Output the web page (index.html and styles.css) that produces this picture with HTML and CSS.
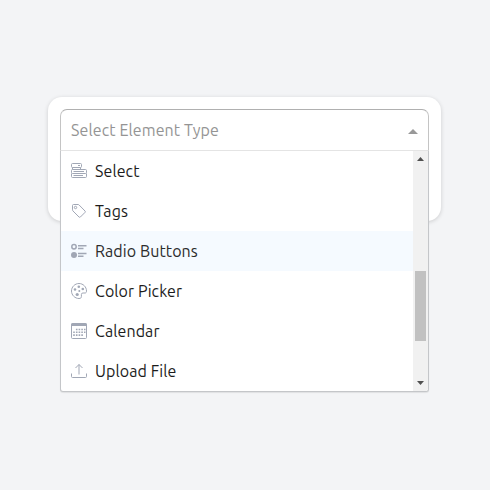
FILE: index.html
```
<!DOCTYPE html>
<html lang="en">
<head>
<meta charset="utf-8">
<title>Element type</title>
<link rel="stylesheet" href="styles.css">
</head>
<body>
<main class="card">
  <div class="select">
    <div class="control">
      <span class="placeholder">Select Element Type</span>
      <span class="arrow"></span>
    </div>
    <div class="menu">
      <ul class="options">
        <li class="option">
          <svg class="icon" viewBox="0 0 16 16"><rect x=".5" y=".5" width="10" height="4" rx="1"/><rect x=".5" y="6.5" width="15" height="4" rx="1"/><path d="M1.500 4.500V6.500M9.500 4.500V6.500M.5 10.500V13.500q0 1 1 1H14.500q1 0 1-1V10.500M2.500 8.500H13M2.500 12.500H12M7 2.500H9"/></svg>
          <span class="label">Select</span>
        </li>
        <li class="option">
          <svg class="icon" viewBox="0 0 16 16"><path d="M1.500 2.500q0-1 1-1H7q.6 0 1 .4L14 8q.7.700 0 1.400L9.400 14q-.7.700-1.400 0L2 8q-.5-.5-.5-1.200Z"/><circle cx="4.500" cy="4.500" r="1.200"/></svg>
          <span class="label">Tags</span>
        </li>
        <li class="option active">
          <svg class="icon" viewBox="0 0 16 16"><g class="thick"><circle cx="3" cy="3.800" r="2.200"/><path d="M7 2.800H15.500M7 5.500H12.500M7 10.500H15.500M7 13.200H12.500"/></g><circle class="solid" cx="3" cy="12" r="3"/></svg>
          <span class="label">Radio Buttons</span>
        </li>
        <li class="option">
          <svg class="icon" viewBox="0 0 16 16"><path d="M8 .5C3.900.5.5 3.900.5 8s3.400 7.500 7.500 7.500c1.800 0 2.400-.8 2.400-1.900V11.500q0-1.500 1.500-1.500h2.200c1 0 1.400-.8 1.400-2C15.500 3.900 12.100.5 8 .5Z"/><g class="solid"><circle cx="7.800" cy="3.700" r="1.300"/><circle cx="11.800" cy="6" r="1.300"/><circle cx="4" cy="6.500" r="1.300"/><circle cx="8.300" cy="8" r="1"/><circle cx="6.200" cy="11.500" r="1.600"/></g></svg>
          <span class="label">Color Picker</span>
        </li>
        <li class="option">
          <svg class="icon" viewBox="0 0 16 16"><rect x=".5" y=".5" width="15" height="15" rx="1"/><path class="solid" d="M0 2q0-2 2-2H14q2 0 2 2V3H0Z"/><path class="dots" d="M4.900 6.500H14.500M2.200 9.300H14.500M2.200 12.100H11.900"/></svg>
          <span class="label">Calendar</span>
        </li>
        <li class="option">
          <svg class="icon" viewBox="0 0 16 16"><path d="M.5 10.500V13.500q0 1 1 1H14.500q1 0 1-1V10.500M8 11.500V1.500M4.500 5L8 1.500L11.500 5"/></svg>
          <span class="label">Upload File</span>
        </li>
      </ul>
      <div class="scrollbar">
        <svg class="step" viewBox="0 0 15 15"><path d="M4 10H11L7.500 6Z"/></svg>
        <div class="track"><div class="thumb"></div></div>
        <svg class="step" viewBox="0 0 15 15"><path d="M4 5H11L7.500 9Z"/></svg>
      </div>
    </div>
  </div>
</main>
</body>
</html>
```
FILE: styles.css
```
* { box-sizing: border-box; }
body {
  margin: 0;
  padding: 97px 49px 0 48px;
  height: 490px;
  overflow: hidden;
  background: #f3f4f6;
  font: 16px/24px Ubuntu, "Noto Sans", sans-serif;
}
.card {
  height: 124px;
  padding: 12px;
  background: #fff;
  border-radius: 14px;
  box-shadow: 0 1px 4px rgba(0, 0, 0, .16);
}
.select { position: relative; }
.control {
  display: flex;
  align-items: center;
  justify-content: space-between;
  height: 42px;
  padding: 0 10px;
  border: 1px solid #b5b5b5;
  border-color: #b0b0b0 #c4c4c4 #e4e4e4;
  border-radius: 7px 7px 0 0;
  background: #fff;
}
.placeholder {
  color: #949494;
  letter-spacing: .11px;
  white-space: nowrap;
}
.arrow {
  margin-top: 2px;
  border: 5px solid transparent;
  border-top: 0;
  border-bottom-color: #999;
}
.menu {
  position: absolute;
  top: 42px;
  left: 0;
  width: 100%;
  height: 241px;
  display: flex;
  background: #fff;
  border: solid #c4c6c9;
  border-width: 0 1px 1px;
  border-radius: 0 0 3px 3px;
  box-shadow: 0 1px 1px rgba(0, 0, 0, .08);
  overflow: hidden;
}
.options {
  flex: 1;
  margin: 0;
  padding: 0;
  list-style: none;
}
.option {
  display: flex;
  align-items: center;
  gap: 8px;
  height: 40px;
  padding-left: 10px;
  color: #1c1c1c;
}
.active { background: #f5faff; color: #2c2c2c; }
.icon {
  width: 16px;
  height: 16px;
  fill: none;
  stroke: #a1a7b5;
  stroke-width: 1;
}
.thick { stroke-width: 1.5; }
.solid { fill: #a1a7b5; stroke: none; }
.dots { stroke-width: 1.6; stroke-dasharray: 1.6 1.1; }
.label { letter-spacing: .09px; white-space: nowrap; }
.scrollbar {
  width: 15px;
  display: flex;
  flex-direction: column;
  background: #f1f1f1;
}
.step { width: 15px; height: 15px; fill: #505050; }
.track { flex: 1; padding: 105px 2px 0; }
.thumb { height: 70px; background: #c1c1c1; }
```
